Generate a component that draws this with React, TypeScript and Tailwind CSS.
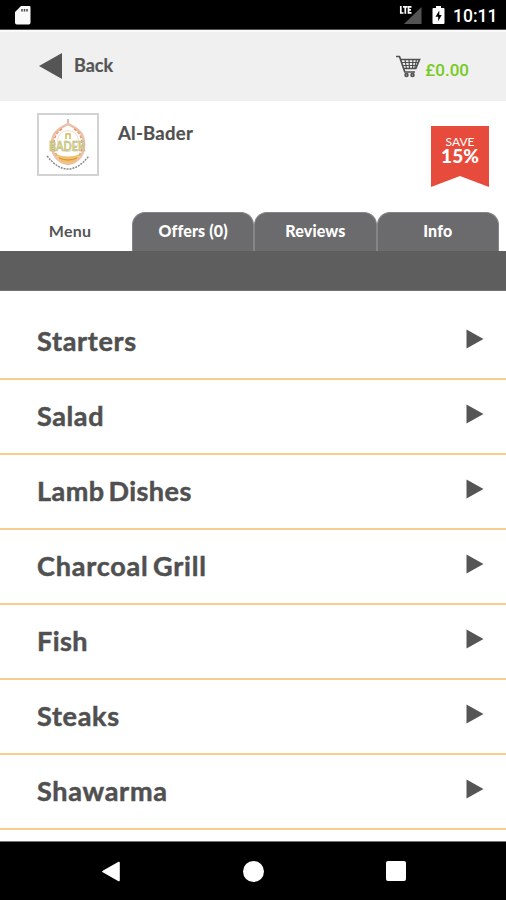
const categories = [
    { name: "Starters", tracking: "tracking-[0.700px]" },
    { name: "Salad", tracking: "tracking-[0.600px]" },
    { name: "Lamb Dishes", tracking: "tracking-[0.450px] [word-spacing:-3px]" },
    { name: "Charcoal Grill", tracking: "tracking-[0.800px] [word-spacing:-3px]" },
    { name: "Fish", tracking: "tracking-[0.400px]" },
    { name: "Steaks", tracking: "tracking-[0.700px]" },
    { name: "Shawarma", tracking: "tracking-[0.700px]" },
];

const tabs = ["Offers (0)", "Reviews", "Info"];

function StatusBar() {
    return (
        <div className="flex h-[30px] shrink-0 items-center justify-between border-b border-[#555555] bg-black pl-[15px] pr-[10px] text-white">
            <svg width="16" height="20" viewBox="0 0 16 20">
                <path d="M6 1h8.200a1.300 1.300 0 0 1 1.300 1.300v15.400a1.800 1.800 0 0 1-1.800 1.800H1.800A1.800 1.800 0 0 1 0 17.700V7z" fill="#fafafa" />
                <path d="M7 4v2.500M9.500 4v2.500M12 4v2.500" stroke="#444444" strokeWidth="1.500" />
            </svg>
            <div className="flex items-center">
                <svg width="23" height="20" viewBox="0 0 23 20">
                    <path d="M22.500 2v17H5z" fill="#545454" />
                    <path d="M1.800 1v7h2.700M4 1.800h4.400M6.300 1.500V8.700M12.500 1.800H9.500v6.100h3M9.500 4.800H12" fill="none" stroke="#ffffff" strokeWidth="1.700" />
                </svg>
                <svg className="ml-[10px]" width="13" height="20" viewBox="0 0 13 20">
                    <path d="M4 1h5v2h2.500a1 1 0 0 1 1 1v14a1 1 0 0 1-1 1h-10a1 1 0 0 1-1-1V4a1 1 0 0 1 1-1H4z" fill="#ffffff" />
                    <path d="M7.300 5.500 3.500 11.800h2.700v4.400L9.700 10H7.300z" fill="#000000" />
                </svg>
                <span className="ml-[8px] mt-[2px] w-[43px] font-['Roboto',sans-serif] text-[17.500px] font-medium leading-[28px]">10:11</span>
            </div>
        </div>
    );
}

function CartIcon() {
    return (
        <svg width="26" height="24" viewBox="0 0 26 24" fill="none" stroke="#505050">
            <path d="M1 2.500h3.500L9.800 18H20" strokeWidth="1.700" />
            <path d="M6 5.500h18.500L20.800 14.500H8.500" strokeWidth="1.700" />
            <path d="M7 8.500h16M8 11.500h14M10 5.500l1.500 9M14 5.500l.5 9M18 5.500l-.5 9M21.500 5.500l-1.800 9" strokeWidth="1.200" />
            <circle cx="11.500" cy="21" r="1.400" strokeWidth="1.700" />
            <circle cx="17.500" cy="21" r="1.400" strokeWidth="1.700" />
        </svg>
    );
}

function Header() {
    return (
        <header className="flex h-[71px] shrink-0 items-start justify-between border-t-2 border-[#fafafa] bg-[#f0f0f0] pl-[39px] pr-[37px]">
            <div className="mt-[21px] flex items-center">
                <svg width="24" height="26" viewBox="0 0 24 26">
                    <path d="M23 0v26L0 13z" fill="#555555" />
                </svg>
                <span className="mb-[2px] ml-[11px] text-[18px] font-bold leading-6 text-[#555555] [-webkit-text-stroke:0.2px]">Back</span>
            </div>
            <div className="mt-[18px] flex items-center">
                <CartIcon />
                <span className="ml-[4px] mt-[8px] font-['Roboto',sans-serif] text-[17px] font-medium leading-6 text-[#76cb20]">£0.00</span>
            </div>
        </header>
    );
}

function RestaurantLogo() {
    return (
        <svg width="58" height="59" viewBox="0 0 58 59" fill="none">
            <path d="M29 4v6" stroke="#d3a48c" strokeWidth="1.500" />
            <path d="M29 9c-5 3-15 6-16 18s5 20 16 22c11-2 17-10 16-22S34 12 29 9z" stroke="#edc0a8" strokeWidth="2.500" />
            <path d="M23 14c-9 5-11 19-4 28M35 14c9 5 11 19 4 28" stroke="#e59a6b" strokeWidth="1.500" strokeDasharray="3 1.500" />
            <circle cx="29" cy="26" r="10.500" stroke="#f3dfd0" />
            <path d="M27 24v-5h4v5" stroke="#d0bd58" strokeWidth="1.500" />
            <path d="M17 39q12 5 24 0l-4 7q-8 4-16 0z" fill="#efc468" />
            <path d="M20 43q9 4 18 0" stroke="#dd9148" strokeWidth="1.300" />
            <text x="28" y="36" textAnchor="middle" textLength="36" lengthAdjust="spacingAndGlyphs" fill="#e2d668" stroke="#a8b2a0" strokeWidth=".5" className="font-['Lato',sans-serif] text-[14px] font-bold">BADER</text>
            <path d="M8 41q21 26 42 0" stroke="#8a8a8a" strokeWidth="1.500" strokeDasharray="2 1" />
        </svg>
    );
}

function Restaurant() {
    return (
        <section className="flex h-[111px] shrink-0 items-start pl-[37px] pr-[17px] pt-[12px]">
            <div className="h-[63px] w-[62px] border-2 border-[#d2d2d2] bg-white">
                <RestaurantLogo />
            </div>
            <h1 className="ml-[19px] mt-[8px] text-[18.500px] font-bold leading-6 tracking-[0.250px] text-[#505050] [-webkit-text-stroke:0.2px]">Al-Bader</h1>
            <div className="ml-auto mt-[13px] h-[61px] w-[58px] bg-[#e74b3b] pt-[9px] text-center text-white [clip-path:polygon(0_0,100%_0,100%_100%,50%_82%,0_100%)]">
                <div className="text-[12px] leading-[14px]">SAVE</div>
                <div className="text-[19px] font-black leading-[14px]">15%</div>
            </div>
        </section>
    );
}

function TabBar() {
    return (
        <nav className="flex h-[39px] shrink-0 text-[16px] leading-[35px]">
            <button className="flex w-[132px] justify-center pl-[8px] font-bold tracking-[0.200px] text-[#555555]">
                <span className="mt-px">Menu</span>
            </button>
            {tabs.map((tab) => (
                <button
                    key={tab}
                    className="flex w-[122.300px] justify-center rounded-t-[13px] border-x border-t border-[#858587] bg-[#6b6b6d] font-black tracking-[0.150px] text-white"
                >
                    {tab}
                </button>
            ))}
        </nav>
    );
}

function NavigationBar() {
    return (
        <div className="flex h-[59px] shrink-0 items-center border-t border-[#777777] bg-black pl-[102px]">
            <svg width="18" height="21" viewBox="0 0 18 21">
                <path d="M16.500.800a1 1 0 0 1 1.300 1v17.400a1 1 0 0 1-1.300 1L.700 11.300a1 1 0 0 1 0-1.600z" fill="#ffffff" />
            </svg>
            <div className="ml-[123px] size-[21px] rounded-full bg-white" />
            <div className="ml-[122px] size-[20px] rounded-[2px] bg-white" />
        </div>
    );
}

export default function App() {
    return (
        <div className="flex h-[900px] w-[506px] flex-col overflow-hidden bg-white font-['Lato',sans-serif]">
            <StatusBar />
            <Header />
            <Restaurant />
            <TabBar />
            <div className="h-[40px] shrink-0 border-b border-[#757575] bg-[#5e5e5e]" />
            <main className="min-h-0 flex-1 overflow-hidden pt-[14px]">
                {categories.map((category) => (
                    <div key={category.name} className="flex h-[75px] items-center justify-between border-b-2 border-[#f9cc90] pl-[37px] pr-[22px]">
                        <span className={`text-[27px] font-bold text-[#505050] [-webkit-text-stroke:0.5px] ${category.tracking}`}>{category.name}</span>
                        <svg className="mb-[5px]" width="18" height="20" viewBox="0 0 18 20">
                            <path d="M.500.500v19L17.500 10z" fill="#555555" />
                        </svg>
                    </div>
                ))}
            </main>
            <NavigationBar />
        </div>
    );
}
